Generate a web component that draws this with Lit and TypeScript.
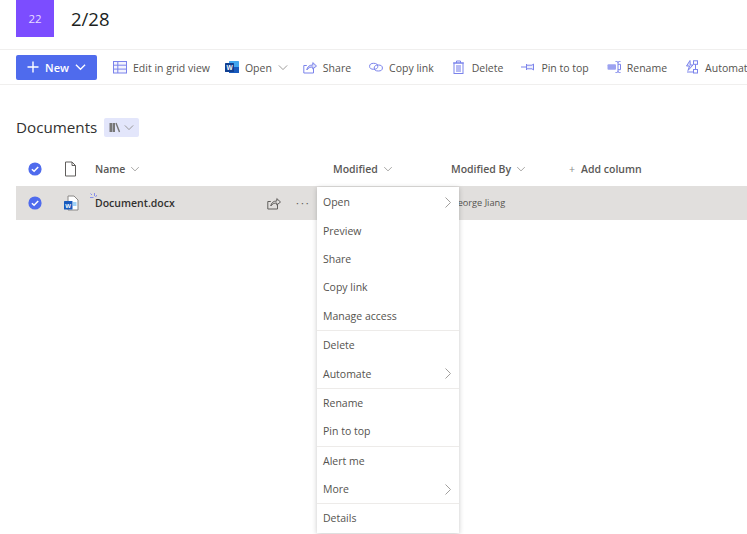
import { LitElement, html, css, svg } from "lit";
import { customElement } from "lit/decorators.js";

const blue = "#7b83eb";
const chev = (cls: string) => html`<svg class=${cls} viewBox="0 0 12 8"><path d="M1 1.500 6 6.500 11 1.500" fill="none" stroke="currentColor" stroke-width="1"/></svg>`;
const check = html`<svg class="check" viewBox="0 0 14 14"><circle cx="7" cy="7" r="6.600" fill="#4f6bed"/><path d="M3.900 7.200 6.100 9.300 10.200 4.900" fill="none" stroke="#fff" stroke-width="1.500"/></svg>`;
const wordIcon = html`<svg class="ic" viewBox="0 0 14 14"><rect x="4" y="1" width="10" height="12" rx=".6" fill="#41a5ee"/><rect x="4" y="7" width="10" height="6" fill="#185abd"/><rect x="0" y="3" width="9" height="9" rx=".6" fill="#103f91"/><text x="4.500" y="10" text-anchor="middle" font-size="6.500" font-weight="700" fill="#fff" font-family="Liberation Sans">W</text></svg>`;
const s = (body: unknown) => html`<svg class="ic" viewBox="0 0 14 14" fill="none" stroke=${blue} stroke-width="1">${body}</svg>`;
const icons: Record<string, unknown> = {
  grid: s(svg`<rect x=".5" y="1.500" width="13" height="11.500" fill="#f3f4fd"/><path d="M.5 5.200h13M.5 9.100h13M4.800 1.500V13"/>`),
  share: s(svg`<path d="M10.500 8.500V13H.8V5.500h3"/><path d="M3.800 10c.4-3.300 2.700-5 6-5V2.600L13.500 6 9.800 9V7c-2.700 0-4.600.8-6 3z" fill="#dfe2fa"/>`),
  link: s(svg`<ellipse cx="4.700" cy="6.300" rx="4.100" ry="3"/><ellipse cx="9.300" cy="8" rx="4.100" ry="3"/>`),
  del: s(svg`<path d="M1 3h11M4.500 3V1h4v2"/><rect x="2" y="3" width="9" height="10.500"/><rect x="4" y="5" width="5" height="7" fill=${blue} stroke="none" opacity=".55"/>`),
  pin: s(svg`<path d="M0 7h5M5.500 4v6"/><path d="M5.500 5.200h5.500l1.500-1.200v6L11 8.800H5.500z" fill="#eef0fc"/>`),
  rename: s(svg`<rect x=".5" y="4.300" width="8.500" height="5.400" rx="1" fill=${blue} stroke="none" opacity=".75"/><path d="M8.500 1.500h1.200q1.300 0 1.300 1.300v8.400q0 1.300-1.300 1.300H8.500M13.500 1.500h-1.200Q11 1.500 11 2.800M13.500 12.500h-1.200Q11 12.500 11 11.200M11 4.300h2.500v5.400H11"/>`),
  auto: s(svg`<path d="M5 .5 1.500 6h3L3 10.500 8 5H5.300z" fill="#dfe2fa"/><rect x="8.500" y=".8" width="4" height="3.500"/><rect x="8.500" y="9.500" width="4" height="3.500"/><path d="M10.500 4.300v5.200M2 12h6"/>`),
};
const cmds = [
  { i: "grid", t: "Edit in grid view", c: "first" },
  { i: "word", t: "Open", c: "tight", chev: true },
  { i: "share", t: "Share", c: "" },
  { i: "link", t: "Copy link", c: "" },
  { i: "del", t: "Delete", c: "" },
  { i: "pin", t: "Pin to top", c: "" },
  { i: "rename", t: "Rename", c: "" },
  { i: "auto", t: "Automate", c: "" },
];
const menu = [
  [["Open", 1], ["Preview"], ["Share"], ["Copy link"], ["Manage access"]],
  [["Delete"], ["Automate", 1]],
  [["Rename"], ["Pin to top"]],
  [["Alert me"], ["More", 1]],
  [["Details"]],
];

@customElement("app-root")
export class AppRoot extends LitElement {
  static styles = css`
    :host { display: block; position: relative; width: 747px; height: 534px; overflow: hidden; background: #fff;
      font-family: "Open Sans", "Noto Sans", sans-serif; color: #323130; font-size: 11px; }
    .head { display: flex; height: 50px; padding-left: 16px; box-sizing: border-box; border-bottom: 1px solid #f0efee; }
    .tile { width: 38px; height: 37px; background: #7c4dff; color: #e8deff; font-size: 11.500px; display: flex; align-items: center; justify-content: center; }
    .title { margin-left: 17px; font-size: 18.500px; line-height: 38px; color: #201f1e; }
    .bar { display: flex; align-items: center; height: 35px; padding-left: 16px; border-bottom: 1px solid #f0efee; box-sizing: border-box; white-space: nowrap; overflow: hidden; }
    .new { flex: none; width: 81px; height: 25px; margin-right: 16px; background: #4f6bed; color: #fff; border-radius: 2px; font-weight: 600; display: flex; align-items: center; justify-content: center; gap: 6px; }
    .new svg.plus { width: 12px; height: 12px; }
    .new svg.cv { width: 11px; height: 8px; }
    .cmd { flex: none; display: flex; align-items: center; gap: 6px; margin-right: 18px; color: #55534f; font-size: 10.500px; }
    .cmd span { padding-top: 1px; }
    .cmd.first { margin-right: 15px; }
    .cmd.tight { margin-right: 15px; }
    .cv { width: 10px; height: 7px; color: #8a8886; margin-left: 0; }
    .ic { width: 14px; height: 14px; flex: none; }
    .libs { display: flex; align-items: center; margin: 30px 0 0 16px; height: 24px; }
    .libs b { font-weight: 400; font-size: 15.200px; color: #323130; }
    .view { margin-left: 7px; width: 35px; height: 19px; background: #e3e6fb; border-radius: 2px; display: flex; align-items: center; justify-content: center; gap: 3px; color: #8a8886; }
    .view svg.bk { width: 12px; height: 11px; }
    .cols { display: flex; align-items: center; height: 34px; margin-top: 13px; padding-left: 16px; color: #5a5856; font-weight: 600; font-size: 10.500px; }
    .row { display: flex; align-items: center; height: 34px; margin-left: 16px; background: #e1dfdd; font-size: 10.500px; }
    .check { width: 14px; height: 14px; flex: none; margin-left: 12px; }
    .c1 { width: 32px; margin-left: 21px; flex: none; display: flex; }
    .row .c1 { margin-left: 22px; width: 31px; }
    .c1 svg { width: 15px; height: 16px; }
    .name { width: 238px; flex: none; display: flex; gap: 5px; align-items: center; }
    .mod { width: 118px; flex: none; display: flex; gap: 5px; align-items: center; }
    .by { width: 118px; flex: none; display: flex; gap: 5px; align-items: center; }
    .add { display: flex; gap: 6px; align-items: center; }
    .add i { font-style: normal; color: #8a8886; font-weight: 400; }
    .cols .cv { width: 10px; height: 6px; }
    .doc { position: relative; width: 172px; flex: none; font-weight: 600; color: #323130; }
    .doc svg { position: absolute; left: -5px; top: -4px; width: 7px; height: 7px; }
    .rowic { width: 14px; height: 14px; flex: none; color: #605e5c; }
    .dots { margin-left: 15px; letter-spacing: 2px; color: #605e5c; font-size: 11px; line-height: 10px; }
    .person { position: absolute; left: 451px; top: 196px; font-size: 9.200px; color: #55534f; line-height: 13px; }
    .menu { position: absolute; left: 317px; top: 187px; width: 142px; height: 346px; padding-top: 1px; box-sizing: border-box; background: #fff;
      box-shadow: 0 1px 5px rgba(0,0,0,.22); display: flex; flex-direction: column; color: #55534f; font-size: 10.500px; }
    .group { border-bottom: 1px solid #edebe9; }
    .group:last-child { border-bottom: 0; }
    .item { height: 28.400px; display: flex; align-items: center; justify-content: space-between; padding: 0 8px 0 6px; }
    .item svg { width: 6px; height: 11px; color: #a19f9d; }
  `;

  render() {
    return html`
      <div class="head"><div class="tile">22</div><div class="title">2/28</div></div>
      <div class="bar">
        <div class="new">
          <svg class="plus" viewBox="0 0 12 12"><path d="M6 .5v11M.5 6h11" stroke="#fff" stroke-width="1.400"/></svg>
          <span>New</span>
          <svg class="cv" viewBox="0 0 12 8"><path d="M1 1.500 6 6.500 11 1.500" fill="none" stroke="#fff" stroke-width="1.400"/></svg>
        </div>
        ${cmds.map((c) => html`<div class="cmd ${c.c}">
          ${c.i === "word" ? wordIcon : icons[c.i]}<span>${c.t}</span>${c.chev ? chev("cv") : ""}
        </div>`)}
      </div>
      <div class="libs"><b>Documents</b>
        <div class="view">
          <svg class="bk" viewBox="0 0 12 11"><path d="M.5 1h2.500v9H.5zM3.500 1h2.500v9H3.500z" fill="#777"/><path d="M7 1l3.500 9" stroke="#777" stroke-width="1.400"/></svg>
          ${chev("cv")}
        </div>
      </div>
      <div class="cols">
        ${check}
        <div class="c1"><svg viewBox="0 0 15 16" fill="none" stroke="#605e5c"><path d="M2.500 1h6.500l3.500 3.500V15H2.500zM9 1v3.500h3.500"/></svg></div>
        <div class="name"><span>Name</span>${chev("cv")}</div>
        <div class="mod"><span>Modified</span>${chev("cv")}</div>
        <div class="by"><span>Modified By</span>${chev("cv")}</div>
        <div class="add"><i>+</i><span>Add column</span></div>
      </div>
      <div class="row">
        ${check}
        <div class="c1"><svg viewBox="0 0 15 16"><path d="M4 1h6l4 4v10H4z" fill="#fff" stroke="#8a8886"/><path d="M9 8h3.500M9 10h3.500" stroke="#41a5ee"/><rect x="0" y="6" width="8.500" height="8.500" rx=".6" fill="#185abd"/><text x="4.200" y="12.500" text-anchor="middle" font-size="6" font-weight="700" fill="#fff" font-family="Liberation Sans">W</text></svg></div>
        <div class="doc">
          <svg viewBox="0 0 7 7" fill="none" stroke=${blue} stroke-width=".9"><path d="M0 5.500 3.500 5.500M4.500 4V1M2 3 .5 1.500M5.500 5 7 3"/></svg>
          Document.docx
        </div>
        <svg class="rowic" viewBox="0 0 14 14" fill="none" stroke="currentColor"><path d="M10.500 8.500V13H.8V5.500h3"/><path d="M3.800 10c.4-3.300 2.700-5 6-5V2.600L13.500 6 9.800 9V7c-2.700 0-4.600.8-6 3z"/></svg>
        <div class="dots">···</div>
      </div>
      <div class="person">George Jiang</div>
      <div class="menu">
        ${menu.map((g) => html`<div class="group">
          ${g.map((it) => html`<div class="item"><span>${it[0]}</span>${it[1]
            ? html`<svg viewBox="0 0 6 11"><path d="M.5.5 5.500 5.500.5 10.500" fill="none" stroke="currentColor"/></svg>`
            : ""}</div>`)}
        </div>`)}
      </div>
    `;
  }
}
